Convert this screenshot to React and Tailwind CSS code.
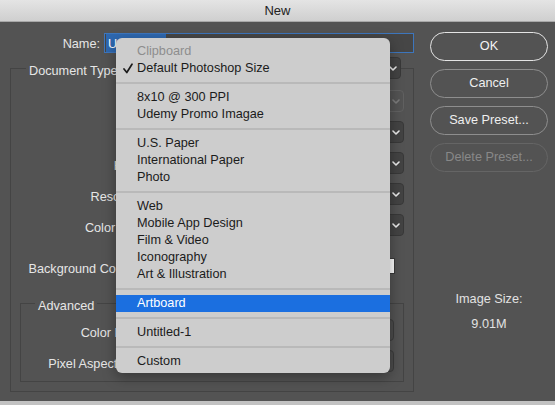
import React from "react";

const Chevron = ({ color = "#ededed" }) => (
  <svg width="8" height="5" viewBox="0 0 8 5">
    <polyline points="1,1 4,4 7,1" fill="none" stroke={color} strokeWidth="1.6" strokeLinecap="round" strokeLinejoin="round" />
  </svg>
);

function Select({ disabled, className = "" }) {
  return (
    <div
      className={
        "h-[22px] rounded-[4px] border flex items-center justify-end pr-[3px] " +
        (disabled ? "bg-[#535353] border-[#616161] " : "bg-[#434343] border-[#393939] ") +
        className
      }
    >
      <Chevron color={disabled ? "#7c7c7c" : "#ededed"} />
    </div>
  );
}

function Row({ label, children, className = "" }) {
  return (
    <div className={"h-[22px] flex items-center gap-[6px] " + className}>
      <div className="w-[143px] text-right leading-[16px] pt-[5px] whitespace-nowrap">{label}</div>
      {children}
    </div>
  );
}

function InnerRow({ label, className = "" }) {
  return (
    <div className={"h-[22px] flex items-center gap-[6px] " + className}>
      <div className="w-[133px] text-right leading-[16px] pt-[5px] whitespace-nowrap">{label}</div>
      <div className="w-[234px] h-[22px] rounded-[4px] border border-[#3c3c3c] bg-[#4c4c4c]" />
    </div>
  );
}

const Item = ({ children, gray, active, check }) => (
  <div
    className={
      "relative h-[17px] flex items-center pl-[21px] leading-[17px] whitespace-nowrap " +
      (active ? "bg-[#1b6fe0] text-white " : gray ? "text-[#8d8d8d] " : "text-[#1b1b1b] ")
    }
  >
    {check && (
      <svg className="absolute left-[7px] top-[3px]" width="10" height="11" viewBox="0 0 10 11">
        <polyline points="1,6 3.8,9.5 9,1.2" fill="none" stroke="#1b1b1b" strokeWidth="1.7" strokeLinecap="round" strokeLinejoin="round" />
      </svg>
    )}
    {children}
  </div>
);

const Sep = () => (
  <div className="h-[12px] flex items-center">
    <div className="h-[2px] w-full bg-[#b9b9b9]" />
  </div>
);

const Btn = ({ children, variant }) => {
  const cls =
    variant === "ok"
      ? "border-[#e4e4e4] text-[#f3f3f3]"
      : variant === "off"
      ? "border-[#656565] text-[#888888]"
      : "border-[#8e8e8e] text-[#efefef]";
  return (
    <div className={"h-[29px] w-[118px] rounded-full border-[1.5px] flex items-center justify-center text-[12.7px] " + cls}>
      {children}
    </div>
  );
};

export default function App() {
  return (
    <div className="relative w-[555px] h-[405px] overflow-hidden bg-[#535353] font-['Liberation_Sans',Arial,sans-serif] text-[12.7px] text-[#e6e6e6]">
      {/* title bar */}
      <div className="h-[22px] bg-gradient-to-b from-[#e4e4e4] to-[#cfcfcf] border-b border-[#a8a8a8] flex items-center justify-center text-[13px] text-[#222222]">
        New
      </div>

      <div className="flex h-[379px]">
        {/* left column */}
        <div className="w-[420px] flex flex-col">
          <div className="mt-[11px] h-[20px] flex items-center">
            <div className="w-[100px] text-right leading-[16px] pt-[2px]">Name:</div>
            <div className="ml-[4px] w-[310px] h-[20px] border border-[#3d76bd] bg-[#464646] flex items-stretch">
              <div className="ml-[1px] w-[60px] bg-[#2e68b0] text-white pl-[2px] pt-[1px] leading-[18px] whitespace-nowrap overflow-hidden">
                Untitled-1
              </div>
            </div>
          </div>

          {/* Document type group */}
          <div className="ml-[10px] mt-[15px] w-[404px] h-[324px] border border-[#444444] flex flex-col">
            <div className="-mt-[12px] h-[22px] flex items-center">
              <span className="ml-[15px] px-[3px] pt-[5px] bg-[#535353] leading-[16px] whitespace-nowrap">Document Type:</span>
              <div className="flex-1" />
              <Select className="w-[240px] mr-[12px]" />
            </div>
            <Row label="" className="mt-[11px]">
              <Select disabled className="w-[244px]" />
            </Row>
            <Row label="" className="mt-[9px]">
              <Select className="w-[244px]" />
            </Row>
            <Row label="Height:" className="mt-[9px]">
              <Select className="w-[244px]" />
            </Row>
            <Row label="Resolution:" className="mt-[9px]">
              <Select className="w-[244px]" />
            </Row>
            <Row label="Color Mode:" className="mt-[9px]">
              <Select className="w-[244px]" />
            </Row>
            <Row label="Background Contents:" className="mt-[19px]">
              <Select className="w-[212px]" />
              <div className="w-[17px] h-[16px] bg-white border border-[#3a3a3a]" />
            </Row>

            {/* Advanced group */}
            <div className="ml-[9px] mt-[26px] w-[384px] h-[79px] border border-[#444444] flex flex-col">
              <div className="-mt-[9px] h-[16px] flex items-center">
                <span className="ml-[14px] px-[3px] pt-[5px] bg-[#535353] leading-[16px]">Advanced</span>
              </div>
              <InnerRow label="Color Profile:" className="mt-[8px]" />
              <InnerRow label="Pixel Aspect Ratio:" className="mt-[9px]" />
            </div>
          </div>
        </div>

        {/* right column */}
        <div className="flex-1 flex flex-col pl-[10px]">
          <div className="mt-[10px] flex flex-col gap-[8px]">
            <Btn variant="ok">OK</Btn>
            <Btn>Cancel</Btn>
            <Btn>Save Preset...</Btn>
            <Btn variant="off">Delete Preset...</Btn>
          </div>
          <div className="w-[118px] mt-[119px] flex flex-col items-center text-[#e2e2e2]">
            <div className="leading-[16px]">Image Size:</div>
            <div className="leading-[16px] mt-[9px]">9.01M</div>
          </div>
        </div>
      </div>

      <div className="h-[4px] bg-[#c2c2c2]" />

      {/* dropdown menu */}
      <div className="absolute left-[116px] top-[38px] w-[274px] h-[335px] rounded-[6px] bg-[#cdcdcd] shadow-[0_4px_14px_rgba(0,0,0,0.35)] pt-[5px] overflow-hidden">
        <Item gray>Clipboard</Item>
        <Item check>Default Photoshop Size</Item>
        <Sep />
        <Item>8x10 @ 300 PPI</Item>
        <Item>Udemy Promo Imagae</Item>
        <Sep />
        <Item>U.S. Paper</Item>
        <Item>International Paper</Item>
        <Item>Photo</Item>
        <Sep />
        <Item>Web</Item>
        <Item>Mobile App Design</Item>
        <Item>Film &amp; Video</Item>
        <Item>Iconography</Item>
        <Item>Art &amp; Illustration</Item>
        <Sep />
        <Item active>Artboard</Item>
        <Sep />
        <Item>Untitled-1</Item>
        <Sep />
        <Item>Custom</Item>
      </div>
    </div>
  );
}
